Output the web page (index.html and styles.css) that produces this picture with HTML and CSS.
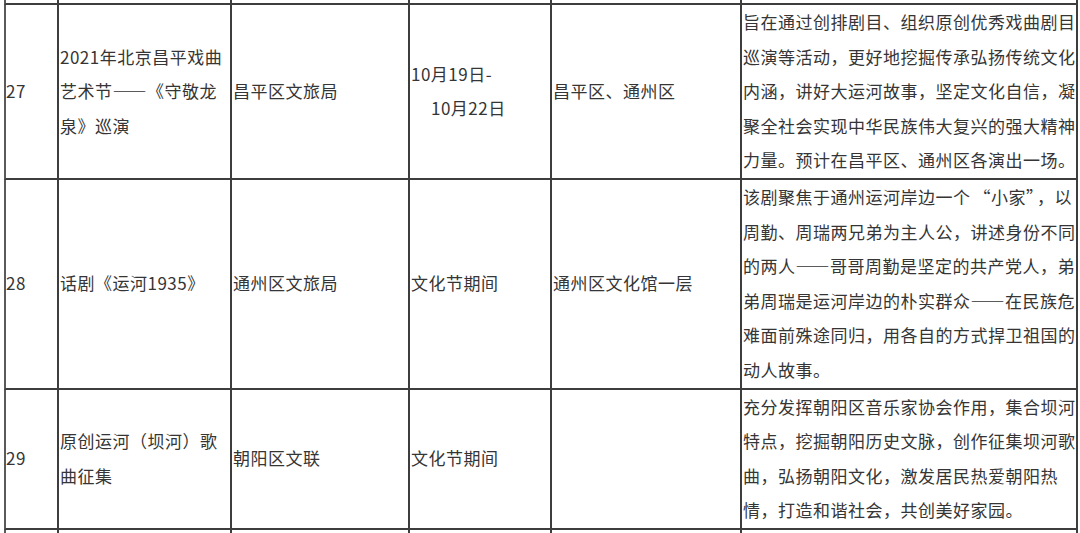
FILE: index.html
```html
<!DOCTYPE html>
<html lang="zh-CN">
<head>
<meta charset="utf-8">
<title>活动列表</title>
<link rel="stylesheet" href="styles.css">
</head>
<body>
<table class="events">
  <colgroup>
    <col class="c-no">
    <col class="c-name">
    <col class="c-org">
    <col class="c-time">
    <col class="c-place">
    <col class="c-desc">
  </colgroup>
  <tbody>
    <tr class="clip-top">
      <td></td><td></td><td></td><td></td><td></td><td></td>
    </tr>
    <tr>
      <td>27</td>
      <td>2021年北京昌平戏曲艺术节——《守敬龙泉》巡演</td>
      <td>昌平区文旅局</td>
      <td>10月19日-<br><span class="indent">10月22日</span></td>
      <td>昌平区、通州区</td>
      <td>旨在通过创排剧目、组织原创优秀戏曲剧目巡演等活动，更好地挖掘传承弘扬传统文化内涵，讲好大运河故事，坚定文化自信，凝聚全社会实现中华民族伟大复兴的强大精神力量。预计在昌平区、通州区各演出一场。</td>
    </tr>
    <tr>
      <td>28</td>
      <td>话剧《运河1935》</td>
      <td>通州区文旅局</td>
      <td>文化节期间</td>
      <td>通州区文化馆一层</td>
      <td>该剧聚焦于通州运河岸边一个<span class="q-open">“小家”</span>，以周勤、周瑞两兄弟为主人公，讲述身份不同的两人——哥哥周勤是坚定的共产党人，弟弟周瑞是运河岸边的朴实群众——在民族危难面前殊途同归，用各自的方式捍卫祖国的动人故事。</td>
    </tr>
    <tr>
      <td>29</td>
      <td>原创运河（坝河）歌曲征集</td>
      <td>朝阳区文联</td>
      <td>文化节期间</td>
      <td></td>
      <td>充分发挥朝阳区音乐家协会作用，集合坝河特点，挖掘朝阳历史文脉，创作征集坝河歌曲，弘扬朝阳文化，激发居民热爱朝阳热情，打造和谐社会，共创美好家园。</td>
    </tr>
    <tr class="clip-bottom">
      <td></td><td></td><td></td><td></td><td></td><td></td>
    </tr>
  </tbody>
</table>
</body>
</html>
```
FILE: styles.css
```css
html, body {
  margin: 0;
  padding: 0;
  background: #ffffff;
  height: 533px;
  overflow: hidden;
}

body {
  padding-left: 4px;
  font-family: "Noto Sans CJK SC", "Noto Sans", sans-serif;
  color: #353535;
}

.events {
  table-layout: fixed;
  border-collapse: separate;
  border-spacing: 0;
  width: 1074px;
}

.c-no { width: 55px; }
.c-name { width: 173px; }
.c-org { width: 178px; }
.c-time { width: 142px; }
.c-place { width: 190px; }
.c-desc { width: 336px; }

.events td {
  padding: 0 0 0 1px;
  border-right: 2px solid #3d3d3d;
  border-bottom: 2px solid #3d3d3d;
  vertical-align: middle;
  text-align: left;
  font-size: 17px;
  letter-spacing: 0.5px;
  line-height: 34.6px;
  word-break: break-all;
}

.events td:first-child {
  border-left: 2px solid #5a5a5a;
  padding-left: 0;
}

.events .clip-top td {
  height: 3px;
  line-height: 0;
  font-size: 0;
}

.events .clip-bottom td {
  height: 20px;
  border-bottom: none;
}

.indent {
  display: inline-block;
  padding-left: 20px;
}

.q-open {
  padding: 0 2px 0 3px;
}
```
